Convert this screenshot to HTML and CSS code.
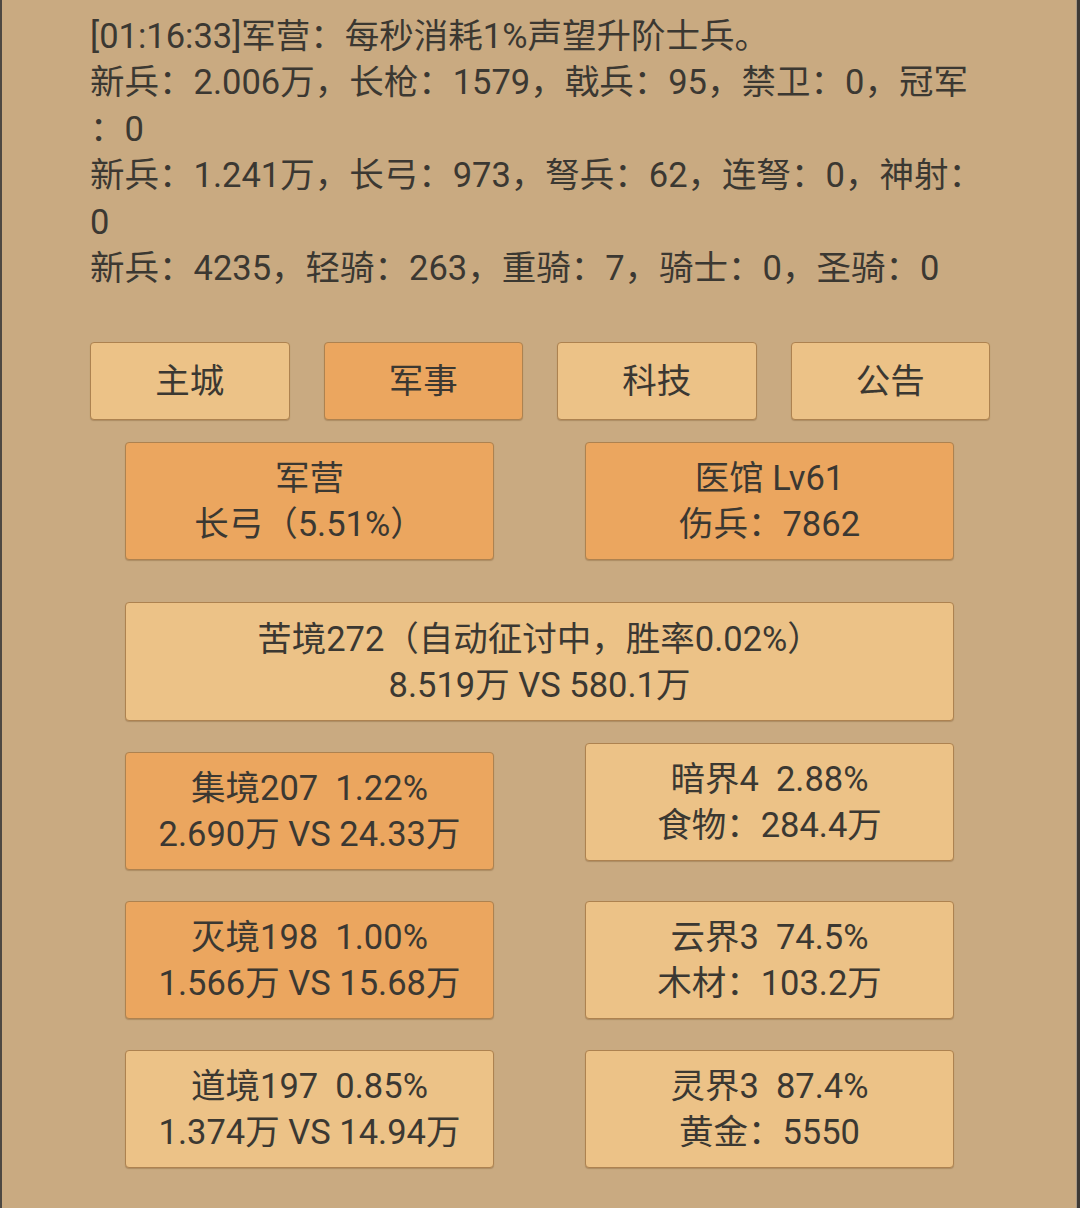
FILE: index.html
```html
<!DOCTYPE html>
<html lang="zh-CN">
<head>
<meta charset="utf-8">
<title>军事</title>
<link rel="stylesheet" href="styles.css">
</head>
<body>
<div class="frame">
  <div class="content">
    <div class="log">
      <div class="line">[01:16:33]军营：每秒消耗1%声望升阶士兵。</div>
      <div class="line">新兵：2.006万，长枪：1579，戟兵：95，禁卫：0，冠军</div>
      <div class="line">：0</div>
      <div class="line">新兵：1.241万，长弓：973，弩兵：62，连弩：0，神射：</div>
      <div class="line">0</div>
      <div class="line">新兵：4235，轻骑：263，重骑：7，骑士：0，圣骑：0</div>
    </div>

    <div class="tabs">
      <div class="btn tab">主城</div>
      <div class="btn tab active">军事</div>
      <div class="btn tab">科技</div>
      <div class="btn tab">公告</div>
    </div>

    <div class="cards">
      <div class="row row-first">
        <div class="btn card active">军营<br>长弓（5.51%）</div>
        <div class="btn card active">医馆 Lv61<br>伤兵：7862</div>
      </div>
      <div class="row row-wide">
        <div class="btn card wide">苦境272（自动征讨中，胜率0.02%）<br>8.519万 VS 580.1万</div>
      </div>
      <div class="row row-pair">
        <div class="btn card active">集境207&nbsp; 1.22%<br>2.690万 VS 24.33万</div>
        <div class="btn card high">暗界4&nbsp; 2.88%<br>食物：284.4万</div>
      </div>
      <div class="row row-pair">
        <div class="btn card active">灭境198&nbsp; 1.00%<br>1.566万 VS 15.68万</div>
        <div class="btn card">云界3&nbsp; 74.5%<br>木材：103.2万</div>
      </div>
      <div class="row row-pair">
        <div class="btn card">道境197&nbsp; 0.85%<br>1.374万 VS 14.94万</div>
        <div class="btn card">灵界3&nbsp; 87.4%<br>黄金：5550</div>
      </div>
    </div>
  </div>
</div>
</body>
</html>
```

FILE: styles.css
```css
html, body {
  margin: 0;
  padding: 0;
}
body {
  background: #c9aa81;
  font-family: Roboto, "Noto Sans CJK SC", sans-serif;
  color: #3b3832;
}
.frame {
  box-sizing: border-box;
  width: 1080px;
  height: 1208px;
  border-left: 2px solid #4d4842;
  border-right: 3px solid #3e3a36;
  box-shadow: inset -1px 0 0 #a89986;
  overflow: hidden;
}
.content {
  margin-left: 88px;
  width: 900px;
}
.log {
  padding-top: 13px;
  font-size: 34.5px;
  line-height: 46.4px;
}
.line {
  white-space: nowrap;
}
.tabs {
  margin-top: 51px;
  display: grid;
  grid-template-columns: repeat(4, 1fr);
  column-gap: 34px;
}
.btn {
  box-sizing: border-box;
  background: #ecc287;
  border: 1.5px solid #ad8250;
  border-radius: 4px;
  box-shadow: 0 1px 1px rgba(120, 85, 45, 0.35);
  text-align: center;
  font-size: 34.5px;
  line-height: 46px;
  white-space: nowrap;
}
.btn.active {
  background: #eba65f;
}
.tab {
  height: 78px;
  display: flex;
  align-items: center;
  justify-content: center;
}
.cards {
  margin: 22px 36px 0 35px;
}
.row {
  display: flex;
  justify-content: space-between;
  align-items: flex-start;
}
.card {
  width: 369px;
  height: 118px;
  display: flex;
  align-items: center;
  justify-content: center;
}
.card.wide {
  width: 829px;
  height: 119px;
}
.row-wide {
  margin-top: 42px;
}
.row-pair {
  margin-top: 31px;
}
.card.high {
  margin-top: -9px;
}
```
